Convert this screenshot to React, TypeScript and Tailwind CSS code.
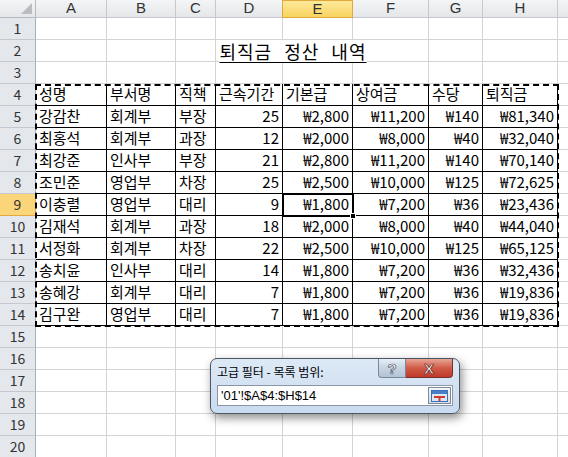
import React from "react";

const COLS = ["A", "B", "C", "D", "E", "F", "G", "H", ""];
const header = ["성명", "부서명", "직책", "근속기간", "기본급", "상여금", "수당", "퇴직금"];
const data: string[][] = [
  ["강감찬", "회계부", "부장", "25", "₩2,800", "₩11,200", "₩140", "₩81,340"],
  ["최홍석", "회계부", "과장", "12", "₩2,000", "₩8,000", "₩40", "₩32,040"],
  ["최강준", "인사부", "부장", "21", "₩2,800", "₩11,200", "₩140", "₩70,140"],
  ["조민준", "영업부", "차장", "25", "₩2,500", "₩10,000", "₩125", "₩72,625"],
  ["이충렬", "영업부", "대리", "9", "₩1,800", "₩7,200", "₩36", "₩23,436"],
  ["김재석", "회계부", "과장", "18", "₩2,000", "₩8,000", "₩40", "₩44,040"],
  ["서정화", "회계부", "차장", "22", "₩2,500", "₩10,000", "₩125", "₩65,125"],
  ["송치윤", "인사부", "대리", "14", "₩1,800", "₩7,200", "₩36", "₩32,436"],
  ["송혜강", "회계부", "대리", "7", "₩1,800", "₩7,200", "₩36", "₩19,836"],
  ["김구완", "영업부", "대리", "7", "₩1,800", "₩7,200", "₩36", "₩19,836"],
];

const font = { fontFamily: '"Noto Sans CJK KR", "Noto Sans", sans-serif' };

function RowHeader({ n }: { n: number }) {
  const sel = n === 9;
  return (
    <div
      className={
        "h-[22px] flex items-center justify-center text-[14px] border-b border-r " +
        (sel
          ? "bg-[#fbd57a] border-b-[#e2a93c] border-r-[#e2a93c] text-[#333]"
          : "bg-[#e4e7eb] border-b-[#c5c9cf] border-r-[#a9afb7] text-[#333]")
      }
    >
      {n}
    </div>
  );
}

function Cell({ r, c }: { r: number; c: number }) {
  const inTable = r >= 4 && r <= 14 && c <= 7;
  let text = "";
  let right = false;
  if (r === 4 && c <= 7) text = header[c];
  if (r >= 5 && r <= 14 && c <= 7) {
    text = data[r - 5][c];
    right = c >= 3;
  }
  const border = inTable ? "border-black" : "border-[#d4d4d4]";
  return (
    <div
      className={
        "h-[22px] flex items-end pb-[1px] px-[3px] text-[15px] leading-[20px] text-black whitespace-nowrap overflow-visible border-b border-r " +
        border +
        (right ? " justify-end" : " justify-start")
      }
    >
      {text}
    </div>
  );
}

export default function App() {
  const rows = Array.from({ length: 20 }, (_, i) => i + 1);
  return (
    <div className="relative w-[568px] h-[457px] overflow-hidden bg-white" style={font}>
      <div className="grid grid-cols-[36px_71px_69px_40px_67px_70px_76px_54px_75px_20px]">
        <div className="h-[18px] relative bg-gradient-to-b from-[#f4f5f6] to-[#e4e6e9] border-b border-r border-[#b5bac1]">
          <div className="absolute right-[3px] bottom-[3px] w-0 h-0 border-l-[11px] border-l-transparent border-b-[11px] border-b-[#b9bcc1]" />
        </div>
        {COLS.map((c, i) =>
          c === "E" ? (
            <div
              key={i}
              className="h-[18px] flex items-center justify-center text-[15px] text-[#333] bg-gradient-to-b from-[#fde99b] to-[#f9d35e] border border-[#e0a83a] -ml-[1px]"
              style={{ fontFamily: '"Liberation Sans", Arial, sans-serif' }}
            >
              {c}
            </div>
          ) : (
            <div
              key={i}
              className="h-[18px] flex items-center justify-center text-[15px] text-[#333] bg-gradient-to-b from-[#f4f5f6] to-[#e4e6e9] border-b border-r border-[#c5c9cf]"
              style={{ fontFamily: '"Liberation Sans", Arial, sans-serif' }}
            >
              {c}
            </div>
          )
        )}
        {rows.map((r) => (
          <React.Fragment key={r}>
            <RowHeader n={r} />
            {COLS.map((_, c) => (
              <Cell key={c} r={r} c={c} />
            ))}
          </React.Fragment>
        ))}
      </div>

      {/* title */}
      <div className="absolute left-[36px] top-[40px] w-[522px] h-[22px] flex items-end justify-center pointer-events-none">
        <span className="ml-[-8px] text-[18px] leading-[22px] underline underline-offset-[3px] decoration-1 text-black bg-white px-[1px] tracking-[1px] [word-spacing:7px]">
          퇴직금 정산 내역
        </span>
      </div>

      {/* marching ants */}
      <div className="absolute left-[35px] top-[84px] w-[524px] h-[243px] border-2 border-dashed border-black pointer-events-none" />

      {/* active cell E9 */}
      <div className="absolute left-[282px] top-[193px] w-[72px] h-[24px] border-2 border-black pointer-events-none" />
      <div className="absolute left-[350px] top-[213px] w-[6px] h-[6px] bg-black border border-white pointer-events-none" />

      {/* dialog */}
      <div className="absolute left-[210px] top-[358px] w-[250px] h-[56px] rounded-[7px] border border-[#4b5563] bg-gradient-to-b from-[#dde9f6] to-[#c9dbef] shadow-[2px_4px_10px_rgba(0,0,0,0.45)] flex flex-col px-[6px]">
        <div className="flex items-start h-[26px]">
          <div className="flex-1 pt-[6px] text-[12px] leading-[14px] text-black">고급 필터 - 목록 범위:</div>
          <div className="flex">
            <div className="w-[28px] h-[19px] rounded-bl-[4px] border border-t-0 border-[#7b8796] bg-gradient-to-b from-[#e7eef6] via-[#c6d3e2] to-[#b3c4d8] flex items-center justify-center text-[15px] font-bold text-white leading-none" style={{ fontFamily: '"Liberation Sans", Arial, sans-serif', WebkitTextStroke: "0.7px #4a5568" }}>
              ?
            </div>
            <div className="w-[47px] h-[19px] rounded-br-[4px] border border-t-0 border-l-0 border-[#7a2f28] bg-gradient-to-b from-[#e8a496] via-[#cf5a47] to-[#c0392b] flex items-center justify-center text-[15px] font-bold text-white leading-none" style={{ fontFamily: '"Liberation Sans", Arial, sans-serif', WebkitTextStroke: "0.7px #5a2620" }}>
              X
            </div>
          </div>
        </div>
        <div className="h-[21px] border border-[#8b97a6] bg-white flex items-center pl-[3px] pr-[1px]">
          <div className="flex-1 text-[13px] leading-[18px] text-black" style={{ fontFamily: '"Liberation Sans", Arial, sans-serif' }}>
            '01'!$A$4:$H$14
          </div>
          <div className="w-[23px] h-[17px] border border-[#7f8a99] bg-gradient-to-b from-[#f3f5f8] to-[#d9dee5] flex items-center justify-center">
            <svg width="17" height="12" viewBox="0 0 17 12">
              <rect x="0.5" y="0.5" width="16" height="11" fill="#dbe8f7" stroke="#3f6fb5" />
              <rect x="1" y="1" width="15" height="3" fill="#4a7fc8" />
              <rect x="3" y="6" width="11" height="2" fill="#d23a2a" />
              <rect x="7.5" y="6" width="2" height="5" fill="#d23a2a" />
            </svg>
          </div>
        </div>
      </div>
    </div>
  );
}
